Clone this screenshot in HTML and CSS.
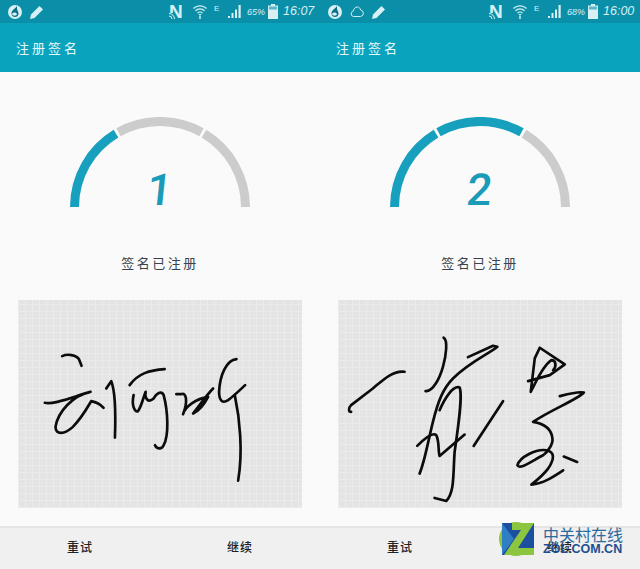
FILE: index.html
```html
<!DOCTYPE html>
<html lang="zh-CN">
<head>
    <meta charset="UTF-8">
    <meta name="viewport" content="width=device-width, initial-scale=1.0">
    <title>注册签名</title>
    <link rel="stylesheet" href="styles.css">
</head>
<body>
    <svg class="defs" width="0" height="0">
        <symbol id="drop" viewBox="0 0 14 14">
            <path d="M7 0a7 7 0 1 1 0 14A7 7 0 0 1 7 0z" fill="#d6f0f4"/>
            <path d="M9 1C7 4 3.500 5 3.500 8.500c0 2 1.500 3.500 3.500 3.500s3.500-1.500 3.500-3.500c0-2-1.500-3-1.500-4.500z" fill="#0b6f88"/>
            <path d="M4 9c1-2 4-2 5 0-.5 2-4 2.500-5 0z" fill="#d6f0f4"/>
        </symbol>
        <symbol id="pencil" viewBox="0 0 14 14">
            <path d="M0 14l1-4.500L9.500 1l3.500 3.500L4.500 13z" fill="#d6f0f4"/>
        </symbol>
        <symbol id="cloud" viewBox="0 0 14 12">
            <path d="M3.500 10.500a2.700 2.700 0 0 1-.3-5.300C3.700 2.500 5.500 1 7.300 1c1.800 0 3 1.400 3.300 3a3.300 3.300 0 0 1 0 6.500z" fill="none" stroke="#cfeef2"/>
        </symbol>
        <symbol id="waves" viewBox="0 0 6 6">
            <path d="M0 .5a5.500 5.500 0 0 1 5.500 5.500M0 3a3 3 0 0 1 3 3" fill="none" stroke="#d6f0f4" stroke-width="1"/>
        </symbol>
        <symbol id="wifi" viewBox="0 0 14 15">
            <path d="M.5 4.500c3.500-3.500 9.500-3.500 13 0M2.500 6.800c2.500-2.500 6.500-2.500 9 0M4.500 9c1.300-1.300 3.700-1.300 5 0" fill="none" stroke="#d6f0f4" stroke-width="1.300"/>
            <path d="M5.500 10h3L7 12zM6.300 12h1.400v3H6.300z" fill="#d6f0f4"/>
        </symbol>
        <symbol id="signal" viewBox="0 0 13 13">
            <path d="M0 11h2v2H0zM3.500 8h2v5h-2zM7 4.500h2V13H7zM10.500 0h2.200v13h-2.200z" fill="#d6f0f4"/>
        </symbol>
        <symbol id="battery" viewBox="0 0 10 15">
            <path d="M3 0h4v1.500h3V15H0V1.500h3z" fill="#d6f0f4"/>
            <path d="M1 2.500h8v3H1z" fill="#5fb6c6"/>
        </symbol>
    </svg>

    <div class="screens">
        <section class="screen">
            <div class="status-bar">
                <div class="status-left">
                    <svg class="icon"><use href="#drop"/></svg>
                    <svg class="icon"><use href="#pencil"/></svg>
                </div>
                <div class="status-right">
                    <span class="nfc">N<svg class="nfc-waves"><use href="#waves"/></svg></span>
                    <svg class="icon wifi"><use href="#wifi"/></svg>
                    <span class="net">E</span>
                    <svg class="icon signal"><use href="#signal"/></svg>
                    <span class="percent">65%</span>
                    <svg class="icon battery"><use href="#battery"/></svg>
                    <span class="time">16:07</span>
                </div>
            </div>
            <header class="app-bar">注册签名</header>
            <main class="content">
                <div class="gauge">
                    <svg class="gauge-arc" viewBox="0 0 180 90">
                        <path class="arc on" d="M4.500 90A85.500 85.500 0 0 1 46 16.700"/>
                        <path class="arc" d="M48.500 15.200A85.500 85.500 0 0 1 131.500 15.200"/>
                        <path class="arc" d="M134 16.700A85.500 85.500 0 0 1 175.500 90"/>
                    </svg>
                    <span class="gauge-num">1</span>
                </div>
                <p class="hint">签名已注册</p>
                <div class="pad">
                    <svg class="ink" viewBox="27 15 848 623">
                        <path d="M158 183C175 175 200 180 208 192L216 212"/>
                        <path d="M106 323C130 330 190 305 243 290C190 300 145 350 138 395C138 420 165 418 190 395C215 370 235 335 245 318C255 320 270 325 282 338"/>
                        <path d="M290 280L305 258C318 290 318 370 316 427"/>
                        <path d="M360 270C385 235 420 225 465 222"/>
                        <path d="M372 300C365 330 375 352 385 348C395 335 400 310 408 290C405 310 415 325 432 310C440 295 455 285 462 300C475 350 478 420 462 450C455 465 440 460 436 450"/>
                        <path d="M500 297L515 297C530 290 535 320 520 357C525 335 560 310 595 305C585 325 570 345 550 355C570 330 590 300 610 280"/>
                        <path d="M680 192C650 195 630 240 628 290C628 320 640 325 655 315C675 300 690 285 706 270"/>
                        <path d="M675 300C690 370 700 470 685 556"/>
                    </svg>
                </div>
            </main>
            <footer class="actions">
                <span class="action">重试</span>
                <span class="action">继续</span>
            </footer>
        </section>

        <section class="screen">
            <div class="status-bar">
                <div class="status-left">
                    <svg class="icon"><use href="#drop"/></svg>
                    <svg class="icon"><use href="#cloud"/></svg>
                    <svg class="icon"><use href="#pencil"/></svg>
                </div>
                <div class="status-right">
                    <span class="nfc">N<svg class="nfc-waves"><use href="#waves"/></svg></span>
                    <svg class="icon wifi"><use href="#wifi"/></svg>
                    <span class="net">E</span>
                    <svg class="icon signal"><use href="#signal"/></svg>
                    <span class="percent">68%</span>
                    <svg class="icon battery"><use href="#battery"/></svg>
                    <span class="time">16:00</span>
                </div>
            </div>
            <header class="app-bar">注册签名</header>
            <main class="content">
                <div class="gauge">
                    <svg class="gauge-arc" viewBox="0 0 180 90">
                        <path class="arc on" d="M4.500 90A85.500 85.500 0 0 1 46 16.700"/>
                        <path class="arc on" d="M48.500 15.200A85.500 85.500 0 0 1 131.500 15.200"/>
                        <path class="arc" d="M134 16.700A85.500 85.500 0 0 1 175.500 90"/>
                    </svg>
                    <span class="gauge-num">2</span>
                </div>
                <p class="hint">签名已注册</p>
                <div class="pad">
                    <svg class="ink" viewBox="27 15 848 623">
                        <path d="M225 230C190 225 160 255 130 280L65 330C55 340 58 350 65 350"/>
                        <path d="M342 128C355 135 350 180 340 215C330 250 310 290 288 288"/>
                        <path d="M415 186L490 152L503 155C480 175 420 200 370 250C340 280 325 320 310 380C295 440 285 500 270 535"/>
                        <path d="M330 345C345 310 370 270 390 277C400 300 385 400 375 470C370 540 375 590 350 617L315 608"/>
                        <path d="M263 452C285 430 310 410 320 420C330 440 325 470 330 482L405 418"/>
                        <path d="M432 452L520 318"/>
                        <path d="M595 258L660 240L705 208L630 158L615 190L603 290C615 270 635 215 665 195C680 195 680 215 670 225"/>
                        <path d="M690 303C720 295 745 288 762 292C740 315 670 340 610 380C640 385 665 400 668 430C670 445 655 470 640 480C610 495 570 525 563 510C570 485 620 460 650 465C675 470 675 490 655 520C640 540 615 560 605 568C640 565 670 545 700 525"/>
                        <path d="M702 484L742 500"/>
                    </svg>
                </div>
            </main>
            <footer class="actions">
                <span class="action">重试</span>
                <span class="action">继续</span>
            </footer>
        </section>
    </div>

    <div class="watermark">
        <svg class="wm-logo" viewBox="0 0 36 38">
            <circle cx="17" cy="19" r="17" fill="#8cc63f"/>
            <path d="M3 3h32v32H3z" fill="#1d4fa0"/>
            <path d="M3 3l12 16L3 35z" fill="#2f7fc4"/>
            <path d="M13 3h22L19 28h16v7H5l17-25h-9z" fill="#8cc63f"/>
        </svg>
        <div class="wm-text">
            <span class="wm-cn">中关村在线</span>
            <span class="wm-en">ZOL.COM.CN</span>
        </div>
    </div>
</body>
</html>
```

FILE: styles.css
```css
body {
    margin: 0;
    width: 640px;
    height: 569px;
    overflow: hidden;
    position: relative;
    font-family: "Noto Sans CJK SC", "Noto Sans", sans-serif;
    background-color: #fafafa;
}

.defs {
    display: block;
}

.screens {
    display: flex;
    height: 569px;
}

.screen {
    width: 320px;
    display: flex;
    flex-direction: column;
}

/* status bar */
.status-bar {
    height: 23px;
    background-color: #0b8fa8;
    color: #d6f0f4;
    display: flex;
    justify-content: space-between;
    align-items: center;
    padding: 0 6px 0 8px;
}

.status-left {
    display: flex;
    align-items: center;
    gap: 8px;
}

.status-right {
    display: flex;
    align-items: center;
}

.icon {
    width: 14px;
    height: 14px;
    display: block;
}

.nfc {
    width: 14px;
    height: 15px;
    position: relative;
    font: bold 19px/15px "Liberation Sans", sans-serif;
}

.nfc-waves {
    position: absolute;
    left: 0;
    bottom: 0;
    width: 6px;
    height: 6px;
    background-color: #0b8fa8;
}

.wifi {
    margin-left: 10px;
    height: 15px;
}

.net {
    width: 7px;
    margin-left: 7px;
    margin-bottom: 7px;
    font: 8px "Liberation Sans", sans-serif;
}

.signal {
    width: 13px;
    height: 13px;
    margin-left: 7px;
}

.percent {
    width: 19px;
    margin-left: 6px;
    font: italic 9px "Liberation Sans", sans-serif;
}

.battery {
    width: 10px;
    height: 15px;
    margin-left: 2px;
}

.time {
    width: 31px;
    margin-left: 5px;
    font: italic 12.500px/1 "Liberation Sans", sans-serif;
}

.app-bar {
    height: 49px;
    line-height: 50px;
    padding-left: 16px;
    background-color: #0aa3be;
    color: #e8f8fa;
    font-size: 13px;
    letter-spacing: 3px;
}

/* content */
.content {
    flex: 1;
    display: flex;
    flex-direction: column;
    align-items: center;
    padding-top: 45px;
    background-color: #fafafa;
}

.gauge {
    width: 180px;
    height: 90px;
    display: grid;
}

.gauge-arc {
    grid-area: 1 / 1;
    width: 180px;
    height: 90px;
    display: block;
}

.arc {
    fill: none;
    stroke: #cccccc;
    stroke-width: 9;
}

.arc.on {
    stroke: #16a0bd;
}

.gauge-num {
    grid-area: 1 / 1;
    align-self: end;
    justify-self: center;
    height: 33px;
    line-height: 33px;
    font-family: Roboto, sans-serif;
    font-size: 44px;
    font-weight: 500;
    color: #1a9bb8;
    transform: skewX(-6deg);
}

.hint {
    margin: 46px 0 0;
    height: 20px;
    line-height: 20px;
    font-size: 13px;
    letter-spacing: 2.500px;
    color: #39434a;
}

.pad {
    margin-top: 27px;
    width: 284px;
    height: 208px;
    background-color: #e4e4e4;
    background-image:
        repeating-linear-gradient(90deg, #ebebeb 0 1px, transparent 1px 7px),
        repeating-linear-gradient(0deg, #ebebeb 0 1px, transparent 1px 7px);
}

.ink {
    display: block;
    width: 284px;
    height: 208px;
    fill: none;
    stroke: #0c0c0c;
    stroke-width: 8;
    stroke-linecap: round;
    stroke-linejoin: round;
}

/* bottom buttons */
.actions {
    height: 43px;
    box-sizing: border-box;
    border-top: 2px solid #e4e4e4;
    background-color: #f0f0f0;
    display: flex;
    align-items: center;
    padding-bottom: 4px;
}

.action {
    flex: 1;
    text-align: center;
    font-size: 12px;
    font-weight: 500;
    letter-spacing: 1px;
    color: #222222;
}

/* site watermark sits over the right screen */
.watermark {
    position: absolute;
    left: 499px;
    top: 520px;
    display: flex;
    gap: 8px;
}

.wm-logo {
    width: 36px;
    height: 38px;
    display: block;
}

.wm-text {
    display: flex;
    flex-direction: column;
    padding-top: 5px;
}

.wm-cn {
    font-size: 16px;
    line-height: 18px;
    color: #2b6a9e;
}

.wm-en {
    font: bold 12.500px/12px "Liberation Sans", sans-serif;
    color: #1f4f8f;
}
```
